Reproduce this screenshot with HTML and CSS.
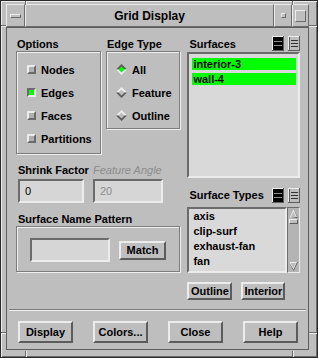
FILE: index.html
```html
<!DOCTYPE html>
<html lang="en">
<head>
    <meta charset="UTF-8">
    <title>Grid Display</title>
    <link rel="stylesheet" href="styles.css">
</head>
<body>
<div class="window">
    <span class="notch notch-top notch-l"></span>
    <span class="notch notch-top notch-r"></span>
    <span class="notch notch-bottom notch-l"></span>
    <span class="notch notch-bottom notch-r"></span>
    <span class="notch notch-left notch-t"></span>
    <span class="notch notch-left notch-b"></span>
    <span class="notch notch-right notch-t"></span>
    <span class="notch notch-right notch-b"></span>

    <div class="titlebar">
        <div class="tb-cell tb-menu"><span class="menu-bar"></span></div>
        <div class="tb-cell tb-title">Grid Display</div>
        <div class="tb-cell tb-min"><span class="min-dot"></span></div>
        <div class="tb-cell tb-max"><span class="max-box"></span></div>
    </div>

    <div class="client">
        <div class="main">
            <div class="col-left">
                <div class="groups">
                    <div class="options">
                        <div class="label">Options</div>
                        <div class="group options-box">
                            <div class="opt-row"><span class="check"></span>Nodes</div>
                            <div class="opt-row"><span class="check on"></span>Edges</div>
                            <div class="opt-row"><span class="check"></span>Faces</div>
                            <div class="opt-row"><span class="check"></span>Partitions</div>
                        </div>
                    </div>
                    <div class="edge-type">
                        <div class="label">Edge Type</div>
                        <div class="group edge-box">
                            <div class="opt-row">
                                <svg class="diamond" width="11" height="11" viewBox="0 0 11 11">
                                    <polygon points="5.5,0 11,5.5 0,5.5" fill="#5c5c5c"/>
                                    <polygon points="0,5.5 11,5.5 5.5,11" fill="#eeeeee"/>
                                    <polygon points="5.5,2.5 8.5,5.5 5.5,8.5 2.5,5.5" fill="#00ff00"/>
                                </svg>All
                            </div>
                            <div class="opt-row">
                                <svg class="diamond" width="11" height="11" viewBox="0 0 11 11">
                                    <polygon points="5.5,0 11,5.5 0,5.5" fill="#eeeeee"/>
                                    <polygon points="0,5.5 11,5.5 5.5,11" fill="#5c5c5c"/>
                                    <polygon points="5.5,2.5 8.5,5.5 5.5,8.5 2.5,5.5" fill="#bebebe"/>
                                </svg>Feature
                            </div>
                            <div class="opt-row">
                                <svg class="diamond" width="11" height="11" viewBox="0 0 11 11">
                                    <polygon points="5.5,0 11,5.5 0,5.5" fill="#eeeeee"/>
                                    <polygon points="0,5.5 11,5.5 5.5,11" fill="#5c5c5c"/>
                                    <polygon points="5.5,2.5 8.5,5.5 5.5,8.5 2.5,5.5" fill="#bebebe"/>
                                </svg>Outline
                            </div>
                        </div>
                    </div>
                </div>

                <div class="fields">
                    <div class="field-group shrink">
                        <div class="label">Shrink Factor</div>
                        <div class="textfield">0</div>
                    </div>
                    <div class="field-group angle">
                        <div class="label disabled">Feature Angle</div>
                        <div class="textfield disabled">20</div>
                    </div>
                </div>

                <div class="pattern">
                    <div class="label">Surface Name Pattern</div>
                    <div class="group pattern-box">
                        <div class="textfield pattern-field"></div>
                        <div class="btn match-btn">Match</div>
                    </div>
                </div>
            </div>

            <div class="col-right">
                <div class="list-head">
                    <div class="label">Surfaces</div>
                    <svg class="toggle" width="12" height="15" viewBox="0 0 12 15">
                        <rect width="12" height="15" fill="#5c5c5c"/>
                        <rect width="11" height="14" fill="#ececec"/>
                        <rect x="1" y="1" width="10" height="13" fill="#000"/>
                        <rect x="2" y="5" width="8" height="1" fill="#8a8a8a"/>
                        <rect x="2" y="9" width="8" height="1" fill="#8a8a8a"/>
                    </svg>
                    <svg class="toggle" width="12" height="15" viewBox="0 0 12 15">
                        <rect width="12" height="15" fill="#5c5c5c"/>
                        <rect width="11" height="14" fill="#ececec"/>
                        <rect x="1" y="1" width="10" height="13" fill="#bebebe"/>
                        <rect x="1" y="1" width="1" height="13" fill="#5c5c5c"/>
                        <rect x="3" y="4" width="7" height="1" fill="#333"/>
                        <rect x="3" y="7" width="7" height="1" fill="#333"/>
                        <rect x="3" y="10" width="7" height="1" fill="#333"/>
                    </svg>
                </div>
                <div class="list surfaces">
                    <div class="item selected">interior-3</div>
                    <div class="item selected">wall-4</div>
                </div>

                <div class="list-head types-head">
                    <div class="label">Surface Types</div>
                    <svg class="toggle" width="12" height="15" viewBox="0 0 12 15">
                        <rect width="12" height="15" fill="#5c5c5c"/>
                        <rect width="11" height="14" fill="#ececec"/>
                        <rect x="1" y="1" width="10" height="13" fill="#000"/>
                        <rect x="2" y="5" width="8" height="1" fill="#8a8a8a"/>
                        <rect x="2" y="9" width="8" height="1" fill="#8a8a8a"/>
                    </svg>
                    <svg class="toggle" width="12" height="15" viewBox="0 0 12 15">
                        <rect width="12" height="15" fill="#5c5c5c"/>
                        <rect width="11" height="14" fill="#ececec"/>
                        <rect x="1" y="1" width="10" height="13" fill="#bebebe"/>
                        <rect x="1" y="1" width="1" height="13" fill="#5c5c5c"/>
                        <rect x="3" y="4" width="7" height="1" fill="#333"/>
                        <rect x="3" y="7" width="7" height="1" fill="#333"/>
                        <rect x="3" y="10" width="7" height="1" fill="#333"/>
                    </svg>
                </div>
                <div class="scroll-list">
                    <div class="list types">
                        <div class="item">axis</div>
                        <div class="item">clip-surf</div>
                        <div class="item">exhaust-fan</div>
                        <div class="item">fan</div>
                    </div>
                    <div class="scrollbar">
                        <svg class="arrow" width="9" height="9" viewBox="0 0 9 9">
                            <polygon points="4.5,0 9,9 0,9" fill="#5c5c5c"/>
                            <polygon points="4.5,0 8,8 0,9" fill="#ececec"/>
                            <polygon points="4.5,2.5 7,8 1.5,8" fill="#bebebe"/>
                        </svg>
                        <span class="thumb"></span>
                        <span class="track"></span>
                        <svg class="arrow" width="9" height="9" viewBox="0 0 9 9">
                            <polygon points="0,0 9,0 4.5,9" fill="#5c5c5c"/>
                            <polygon points="0,0 8,0 4.5,7.5" fill="#ececec"/>
                            <polygon points="1.5,1 7,1 4.5,6.5" fill="#bebebe"/>
                        </svg>
                    </div>
                </div>

                <div class="type-buttons">
                    <div class="btn outline-btn">Outline</div>
                    <div class="btn interior-btn">Interior</div>
                </div>
            </div>
        </div>

        <div class="sep"></div>

        <div class="actions">
            <div class="btn action">Display</div>
            <div class="btn action">Colors...</div>
            <div class="btn action">Close</div>
            <div class="btn action">Help</div>
        </div>
    </div>
</div>
</body>
</html>
```

FILE: styles.css
```css
* {
    box-sizing: border-box;
}
body {
    margin: 0;
    background-color: #bebebe;
    font-family: "Liberation Sans", Arial, sans-serif;
    font-size: 11px;
    font-weight: bold;
    color: #000;
}

/* window frame */
.window {
    position: relative;
    width: 318px;
    height: 358px;
    display: flex;
    flex-direction: column;
    padding: 3px 8px 7px 5px;
    background-color: #bebebe;
    border: 1px solid #2a2a2a;
    box-shadow: inset 1px 1px 0 #ececec, inset -1px -1px 0 #6b6b6b;
}
.notch {
    position: absolute;
    background-color: #6b6b6b;
}
.notch-top, .notch-bottom {
    width: 2px;
    border-right: 1px solid #ececec;
}
.notch-top { top: 0; height: 4px; }
.notch-bottom { bottom: 0; height: 6px; }
.notch-top.notch-l, .notch-bottom.notch-l { left: 24px; }
.notch-top.notch-r, .notch-bottom.notch-r { left: 291px; }
.notch-left, .notch-right {
    height: 2px;
    border-bottom: 1px solid #ececec;
}
.notch-left { left: 0; width: 5px; }
.notch-right { right: 0; width: 8px; }
.notch-left.notch-t, .notch-right.notch-t { top: 24px; }
.notch-left.notch-b, .notch-right.notch-b { top: 331px; }

.titlebar {
    display: flex;
    height: 23px;
}
.tb-cell {
    display: flex;
    align-items: center;
    justify-content: center;
    border: 1px solid;
    border-color: #ececec #6b6b6b #6b6b6b #ececec;
}
.tb-menu { width: 19px; }
.tb-title {
    flex: 1;
    font-size: 12px;
}
.tb-min { width: 18px; }
.tb-max { width: 17px; }
.menu-bar {
    width: 11px;
    height: 4px;
    border: 1px solid;
    border-color: #ececec #6b6b6b #6b6b6b #ececec;
}
.min-dot {
    width: 5px;
    height: 5px;
    border: 1px solid;
    border-color: #ececec #6b6b6b #6b6b6b #ececec;
}
.max-box {
    width: 11px;
    height: 12px;
    border: 1px solid;
    border-color: #ececec #6b6b6b #6b6b6b #ececec;
}

/* dialog body */
.client {
    flex: 1;
    display: flex;
    flex-direction: column;
    padding-top: 10px;
    border: 1px solid #5e5e5e;
}
.main {
    display: flex;
    align-items: flex-start;
    gap: 7px;
    padding: 0 8px 0 9px;
}
.label {
    line-height: 13px;
    padding-left: 1px;
    white-space: nowrap;
}
.label.disabled {
    color: #8c8c8c;
    font-weight: normal;
    font-style: italic;
}
.group {
    border: 1px solid #7d7d7d;
    box-shadow: inset 1px 1px 0 #eeeeee, 1px 1px 0 #eeeeee;
}

.col-left {
    width: 165px;
}
.groups {
    display: flex;
    gap: 5px;
    align-items: flex-start;
}
.options { width: 85px; }
.edge-type { width: 74px; }
.options-box {
    padding: 6px 0 3px 10px;
}
.edge-box {
    padding: 6px 0 1px 9px;
}
.opt-row {
    display: flex;
    align-items: center;
    height: 23px;
}
.check {
    width: 9px;
    height: 9px;
    margin-right: 5px;
    background-color: #b0b0b0;
    border: 2px solid;
    border-color: #ececec #6b6b6b #6b6b6b #ececec;
}
.check.on {
    background-color: #00ff00;
    border-color: #6b6b6b #ececec #ececec #6b6b6b;
}
.diamond {
    margin-right: 5px;
}

.fields {
    display: flex;
    gap: 9px;
    margin: 10px 0 0 2px;
}
.shrink { width: 66px; }
.angle { width: 70px; }
.field-group .label {
    margin-bottom: 2px;
    padding-left: 0;
}
.textfield {
    height: 24px;
    padding-left: 5px;
    line-height: 20px;
    font-weight: normal;
    background-color: #d6d6d6;
    border: 2px solid;
    border-color: #6b6b6b #ececec #ececec #6b6b6b;
}
.textfield.disabled {
    color: #8c8c8c;
}

.pattern {
    margin-top: 10px;
}
.pattern .label {
    padding-left: 2px;
}
.pattern-box {
    display: flex;
    align-items: center;
    gap: 9px;
    height: 46px;
    padding: 2px 0 0 13px;
}
.pattern-field {
    width: 80px;
}

.btn {
    display: flex;
    align-items: center;
    justify-content: center;
    background-color: #bebebe;
    border: 2px solid;
    border-color: #ececec #5c5c5c #5c5c5c #ececec;
    white-space: nowrap;
}
.match-btn {
    width: 47px;
    height: 19px;
}

.col-right {
    width: 113px;
    margin-top: -2px;
}
.list-head {
    display: flex;
    align-items: flex-start;
    gap: 4px;
    height: 16px;
}
.list-head .label {
    flex: 1;
    line-height: 16px;
    padding-left: 2px;
}
.list {
    background-color: #d9d9d9;
    border: 2px solid;
    border-color: #6b6b6b #ececec #ececec #6b6b6b;
}
.surfaces {
    height: 126px;
    padding: 4px 2px 0 3px;
}
.item {
    height: 15px;
    line-height: 15px;
    padding-left: 1px;
    white-space: nowrap;
}
.item.selected {
    height: 12px;
    line-height: 12px;
    margin-bottom: 3px;
    background-color: #00ff00;
}
.types-head {
    margin-top: 10px;
    height: 19px;
}
.types-head .label {
    line-height: 14px;
}
.scroll-list {
    display: flex;
    height: 66px;
}
.types {
    flex: 1;
    padding: 0 2px 0 3px;
    overflow: hidden;
}
.scrollbar {
    width: 13px;
    display: flex;
    flex-direction: column;
    align-items: center;
    padding: 1px 0;
    background-color: #b4b4b4;
    border: 1px solid;
    border-color: #6b6b6b #ececec #ececec #6b6b6b;
}
.thumb {
    width: 9px;
    height: 5px;
    margin-top: 1px;
    background-color: #bebebe;
    border: 1px solid;
    border-color: #ececec #5c5c5c #5c5c5c #ececec;
}
.track {
    flex: 1;
}
.type-buttons {
    display: flex;
    gap: 9px;
    margin-top: 9px;
}
.outline-btn { width: 45px; height: 18px; }
.interior-btn { width: 44px; height: 18px; }

.sep {
    margin: 9px 2px 0;
    border-top: 1px solid #7d7d7d;
    border-bottom: 1px solid #eeeeee;
}
.actions {
    display: flex;
    gap: 20px;
    padding: 10px 0 0 11px;
}
.action {
    width: 55px;
    height: 22px;
}
```
